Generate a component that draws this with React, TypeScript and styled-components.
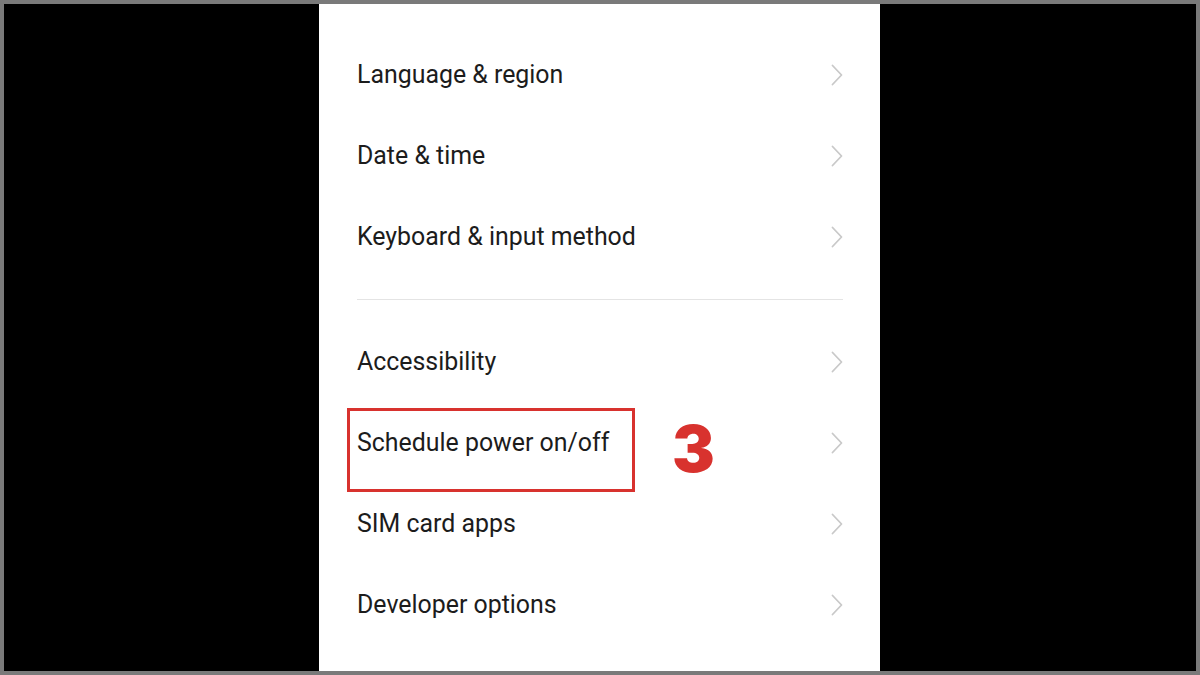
import React from "react";
import styled, { createGlobalStyle } from "styled-components";

const Global = createGlobalStyle`
  html, body { margin: 0; padding: 0; background: #000; }
  body { width: 1200px; height: 675px; overflow: hidden; }
`;

const Frame = styled.div`
  box-sizing: border-box;
  width: 1200px;
  height: 675px;
  border: 4px solid #7a7a7a;
  background: #000;
  display: flex;
  justify-content: flex-start;
  padding-left: 315px;
`;

const Screen = styled.div`
  position: relative;
  box-sizing: border-box;
  width: 561px;
  background: #fff;
  display: flex;
  flex-direction: column;
  padding: 30px 37px 0 38px;
`;

const Row = styled.div`
  height: 81px;
  display: flex;
  align-items: center;
  justify-content: space-between;
`;

const Label = styled.span`
  font-family: Roboto, "Liberation Sans", sans-serif;
  font-size: 24.9px;
  color: #1c1c1c;
`;

const Divider = styled.div`
  height: 44px;
  display: flex;
  align-items: center;
  &::after {
    content: "";
    flex: 1;
    height: 1px;
    background: #e4e4e4;
  }
`;

const Highlight = styled.div`
  position: absolute;
  left: 28px;
  top: 404px;
  width: 288px;
  height: 84px;
  box-sizing: border-box;
  border: 3px solid #d8322e;
`;

const Step = styled.div`
  position: absolute;
  left: 353px;
  top: 405px;
  font-family: Inter, "Liberation Sans", sans-serif;
  font-weight: 900;
  font-size: 64px;
  line-height: 80px;
  color: #d8322e;
`;

const Chevron = () => (
  <svg width="12" height="22" viewBox="0 0 12 22" fill="none">
    <path d="M1.5 1.5 L10.5 11 L1.5 20.5" stroke="#c9c9c9" strokeWidth="1.8" strokeLinecap="round" strokeLinejoin="round" />
  </svg>
);

const groupA = ["Language & region", "Date & time", "Keyboard & input method"];
const groupB = ["Accessibility", "Schedule power on/off", "SIM card apps", "Developer options"];

export default function App() {
  return (
    <>
      <Global />
      <Frame>
        <Screen>
          {groupA.map((t) => (
            <Row key={t}>
              <Label>{t}</Label>
              <Chevron />
            </Row>
          ))}
          <Divider />
          {groupB.map((t) => (
            <Row key={t}>
              <Label>{t}</Label>
              <Chevron />
            </Row>
          ))}
          <Highlight />
          <Step>3</Step>
        </Screen>
      </Frame>
    </>
  );
}
